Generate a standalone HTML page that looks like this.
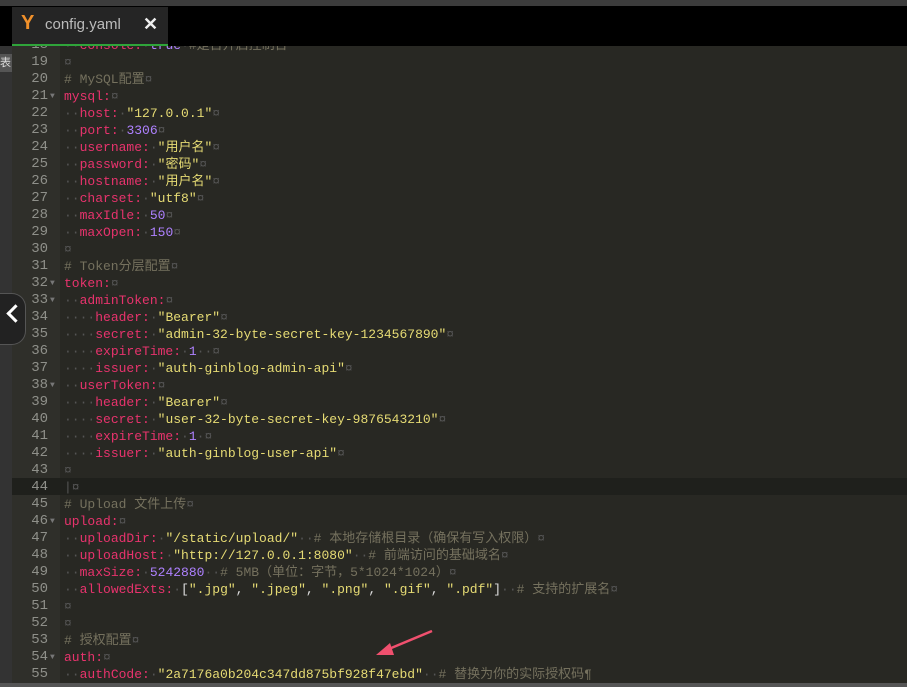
<!DOCTYPE html>
<html><head><meta charset="utf-8"><style>
body{margin:0;width:907px;height:687px;overflow:hidden;background:#282823;position:relative;font-family:"Liberation Mono","Noto Sans CJK SC",monospace}
#top{position:absolute;left:0;top:0;width:907px;height:6px;background:#3c3c3c}
#tabbar{position:absolute;left:0;top:6px;width:907px;height:40px;background:#000}
#tab{position:absolute;left:12px;top:7px;width:156px;height:37px;background:#252525;border-bottom:2px solid #2fa43a}
#tab .y{position:absolute;left:9px;top:5px;color:#f0902a;font:bold 20px "Liberation Sans",sans-serif}
#tab .t{position:absolute;left:33px;top:9px;color:#bbb;font:15px "Liberation Sans",sans-serif}
#tab .x{position:absolute;left:131px;top:7px;color:#eee;font:bold 18px "Liberation Sans",sans-serif}
#left{position:absolute;left:0;top:46px;width:12px;height:641px;background:#333}
#left .a{position:absolute;left:0;top:8px;width:12px;height:18px;background:#555;color:#ddd;font-size:11px;overflow:hidden}
#gut{position:absolute;left:12px;top:46px;width:48px;height:641px;background:#2f2f2a}
#cur{position:absolute;left:12px;top:478px;width:895px;height:17px;background:#1f201c}
#code{position:absolute;left:12px;top:37px;width:895px}
.l{height:17px;line-height:17px;font-size:13px;white-space:pre;position:relative}
.n{position:absolute;left:0;width:36px;text-align:right;color:#8f908a;font-size:14px}
.f{position:absolute;left:38px;color:#777;font-size:8px}
.c{position:absolute;left:52px}
.k{color:#e8336d}.s{color:#e6db74}.m{color:#ae81ff}.g{color:#75715e}.d{color:#555}.w{color:#ddd}
#col{position:absolute;left:0;top:293px;width:25px;height:50px;background:#222;border:1px solid #555;border-left:none;border-radius:0 14px 14px 0}
#col span{position:absolute;left:9px;top:13px;width:10px;height:10px;border-left:3px solid #fff;border-bottom:3px solid #fff;transform:rotate(45deg)}
#sb{position:absolute;left:0;top:683px;width:907px;height:4px;background:#555}
</style></head><body>
<div id="left"><div class="a">表</div></div>
<div id="gut"></div>
<div id="cur"></div>
<div id="code">
<div class="l"><span class="n">18</span><span class="c"><span class="d">··</span><span class="k">console:</span><span class="d">·</span><span class="m">true</span><span class="d">·</span><span class="g">#是否开启控制台</span></span></div>
<div class="l"><span class="n">19</span><span class="c"><span class="d">¤</span></span></div>
<div class="l"><span class="n">20</span><span class="c"><span class="g"># MySQL配置</span><span class="d">¤</span></span></div>
<div class="l"><span class="n">21</span><span class="f">▼</span><span class="c"><span class="k">mysql:</span><span class="d">¤</span></span></div>
<div class="l"><span class="n">22</span><span class="c"><span class="d">··</span><span class="k">host:</span><span class="d">·</span><span class="s">"127.0.0.1"</span><span class="d">¤</span></span></div>
<div class="l"><span class="n">23</span><span class="c"><span class="d">··</span><span class="k">port:</span><span class="d">·</span><span class="m">3306</span><span class="d">¤</span></span></div>
<div class="l"><span class="n">24</span><span class="c"><span class="d">··</span><span class="k">username:</span><span class="d">·</span><span class="s">"用户名"</span><span class="d">¤</span></span></div>
<div class="l"><span class="n">25</span><span class="c"><span class="d">··</span><span class="k">password:</span><span class="d">·</span><span class="s">"密码"</span><span class="d">¤</span></span></div>
<div class="l"><span class="n">26</span><span class="c"><span class="d">··</span><span class="k">hostname:</span><span class="d">·</span><span class="s">"用户名"</span><span class="d">¤</span></span></div>
<div class="l"><span class="n">27</span><span class="c"><span class="d">··</span><span class="k">charset:</span><span class="d">·</span><span class="s">"utf8"</span><span class="d">¤</span></span></div>
<div class="l"><span class="n">28</span><span class="c"><span class="d">··</span><span class="k">maxIdle:</span><span class="d">·</span><span class="m">50</span><span class="d">¤</span></span></div>
<div class="l"><span class="n">29</span><span class="c"><span class="d">··</span><span class="k">maxOpen:</span><span class="d">·</span><span class="m">150</span><span class="d">¤</span></span></div>
<div class="l"><span class="n">30</span><span class="c"><span class="d">¤</span></span></div>
<div class="l"><span class="n">31</span><span class="c"><span class="g"># Token分层配置</span><span class="d">¤</span></span></div>
<div class="l"><span class="n">32</span><span class="f">▼</span><span class="c"><span class="k">token:</span><span class="d">¤</span></span></div>
<div class="l"><span class="n">33</span><span class="f">▼</span><span class="c"><span class="d">··</span><span class="k">adminToken:</span><span class="d">¤</span></span></div>
<div class="l"><span class="n">34</span><span class="c"><span class="d">····</span><span class="k">header:</span><span class="d">·</span><span class="s">"Bearer"</span><span class="d">¤</span></span></div>
<div class="l"><span class="n">35</span><span class="c"><span class="d">····</span><span class="k">secret:</span><span class="d">·</span><span class="s">"admin-32-byte-secret-key-1234567890"</span><span class="d">¤</span></span></div>
<div class="l"><span class="n">36</span><span class="c"><span class="d">····</span><span class="k">expireTime:</span><span class="d">·</span><span class="m">1</span><span class="d">··¤</span></span></div>
<div class="l"><span class="n">37</span><span class="c"><span class="d">····</span><span class="k">issuer:</span><span class="d">·</span><span class="s">"auth-ginblog-admin-api"</span><span class="d">¤</span></span></div>
<div class="l"><span class="n">38</span><span class="f">▼</span><span class="c"><span class="d">··</span><span class="k">userToken:</span><span class="d">¤</span></span></div>
<div class="l"><span class="n">39</span><span class="c"><span class="d">····</span><span class="k">header:</span><span class="d">·</span><span class="s">"Bearer"</span><span class="d">¤</span></span></div>
<div class="l"><span class="n">40</span><span class="c"><span class="d">····</span><span class="k">secret:</span><span class="d">·</span><span class="s">"user-32-byte-secret-key-9876543210"</span><span class="d">¤</span></span></div>
<div class="l"><span class="n">41</span><span class="c"><span class="d">····</span><span class="k">expireTime:</span><span class="d">·</span><span class="m">1</span><span class="d">·¤</span></span></div>
<div class="l"><span class="n">42</span><span class="c"><span class="d">····</span><span class="k">issuer:</span><span class="d">·</span><span class="s">"auth-ginblog-user-api"</span><span class="d">¤</span></span></div>
<div class="l"><span class="n">43</span><span class="c"><span class="d">¤</span></span></div>
<div class="l"><span class="n">44</span><span class="c"><span class="d">|¤</span></span></div>
<div class="l"><span class="n">45</span><span class="c"><span class="g"># Upload 文件上传</span><span class="d">¤</span></span></div>
<div class="l"><span class="n">46</span><span class="f">▼</span><span class="c"><span class="k">upload:</span><span class="d">¤</span></span></div>
<div class="l"><span class="n">47</span><span class="c"><span class="d">··</span><span class="k">uploadDir:</span><span class="d">·</span><span class="s">"/static/upload/"</span><span class="d">··</span><span class="g"># 本地存储根目录（确保有写入权限）</span><span class="d">¤</span></span></div>
<div class="l"><span class="n">48</span><span class="c"><span class="d">··</span><span class="k">uploadHost:</span><span class="d">·</span><span class="s">"http://127.0.0.1:8080"</span><span class="d">··</span><span class="g"># 前端访问的基础域名</span><span class="d">¤</span></span></div>
<div class="l"><span class="n">49</span><span class="c"><span class="d">··</span><span class="k">maxSize:</span><span class="d">·</span><span class="m">5242880</span><span class="d">··</span><span class="g"># 5MB（单位：字节，5*1024*1024）</span><span class="d">¤</span></span></div>
<div class="l"><span class="n">50</span><span class="c"><span class="d">··</span><span class="k">allowedExts:</span><span class="d">·</span><span class="w">[</span><span class="s">".jpg"</span><span class="w">,</span> <span class="s">".jpeg"</span><span class="w">,</span> <span class="s">".png"</span><span class="w">,</span> <span class="s">".gif"</span><span class="w">,</span> <span class="s">".pdf"</span><span class="w">]</span><span class="d">··</span><span class="g"># 支持的扩展名</span><span class="d">¤</span></span></div>
<div class="l"><span class="n">51</span><span class="c"><span class="d">¤</span></span></div>
<div class="l"><span class="n">52</span><span class="c"><span class="d">¤</span></span></div>
<div class="l"><span class="n">53</span><span class="c"><span class="g"># 授权配置</span><span class="d">¤</span></span></div>
<div class="l"><span class="n">54</span><span class="f">▼</span><span class="c"><span class="k">auth:</span><span class="d">¤</span></span></div>
<div class="l"><span class="n">55</span><span class="c"><span class="d">··</span><span class="k">authCode:</span><span class="d">·</span><span class="s">"2a7176a0b204c347dd875bf928f47ebd"</span><span class="d">··</span><span class="g"># 替换为你的实际授权码¶</span></span></div>
</div>
<div id="top"></div>
<div id="tabbar"></div>
<div id="tab"><span class="y">Y</span><span class="t">config.yaml</span><span class="x">✕</span></div>
<div id="col"><span></span></div>
<svg style="position:absolute;left:370px;top:628px" width="66" height="32"><line x1="62" y1="3" x2="14" y2="23" stroke="#f0506e" stroke-width="2.5"/><polygon points="6,27 20,15 24,27" fill="#f0506e"/></svg>
<div id="sb"></div>
</body></html>
